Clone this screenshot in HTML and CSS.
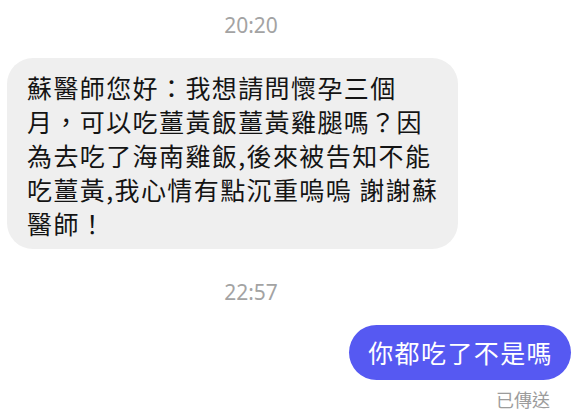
FILE: index.html
```html
<!DOCTYPE html>
<html lang="zh-Hant">
<head>
  <meta charset="UTF-8" />
  <meta name="viewport" content="width=device-width, initial-scale=1.0"/>
  <title>訊息</title>
  <link rel="stylesheet" href="styles.css">
</head>
<body>
  <div class="chat">
    <div class="stamp stamp-first">20:20</div>

    <div class="row row-in">
      <div class="bubble bubble-in">
        蘇醫師您好：我想請問懷孕三個<br>
        月，可以吃薑黃飯薑黃雞腿嗎？因<br>
        為去吃了海南雞飯,後來被告知不能<br>
        吃薑黃,我心情有點沉重嗚嗚 謝謝蘇<br>
        醫師！
      </div>
    </div>

    <div class="stamp stamp-second">22:57</div>

    <div class="row row-out">
      <div class="bubble bubble-out">你都吃了不是嗎</div>
    </div>
    <div class="status">已傳送</div>
  </div>
</body>
</html>
```

FILE: styles.css
```css
* {
  box-sizing: border-box;
  margin: 0;
  padding: 0;
}

body {
  font-family: "Noto Sans CJK TC", "Noto Sans", sans-serif;
  background: #fff;
  width: 575px;
  height: 414px;
  overflow: hidden;
}

.chat {
  display: flex;
  flex-direction: column;
}

.stamp {
  font-family: "Noto Sans", "Liberation Sans", sans-serif;
  font-size: 21px;
  line-height: 24px;
  color: #a3a3a3;
  text-align: center;
  padding-right: 73px;
}

.stamp-first {
  margin-top: 13px;
}

.stamp-second {
  margin-top: 31px;
}

.row {
  display: flex;
}

.row-in {
  margin-top: 21px;
  padding-left: 7px;
}

.row-out {
  justify-content: flex-end;
  padding-right: 4px;
  margin-top: 21px;
}

.bubble {
  font-size: 25px;
  letter-spacing: 1.4px;
}

.bubble-in {
  width: 451px;
  background: #efefef;
  color: #141414;
  border-radius: 26px;
  padding: 12px 10px 9px 20px;
  line-height: 34px;
}

.bubble-out {
  background: #5659f2;
  color: #fff;
  border-radius: 28px;
  height: 55px;
  line-height: 55px;
  padding: 0 18px 0 19px;
}

.status {
  align-self: flex-end;
  margin-right: 25px;
  margin-top: 7px;
  font-size: 18px;
  line-height: 24px;
  color: #9c9c9c;
}
```
